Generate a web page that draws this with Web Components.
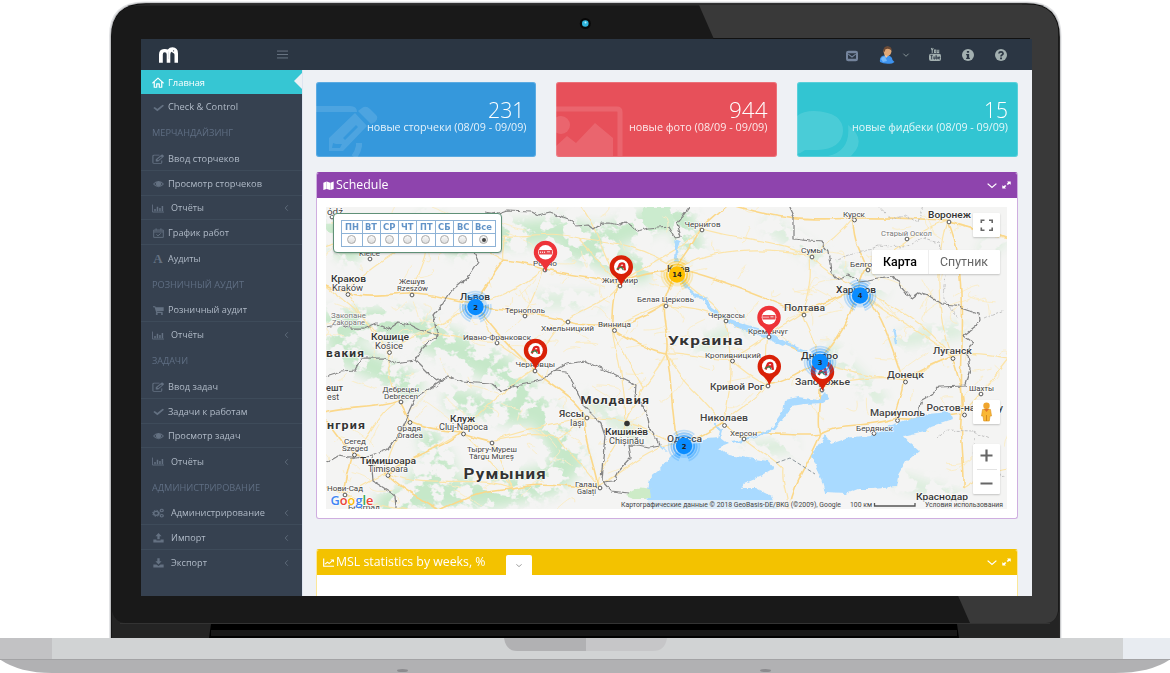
<!DOCTYPE html>
<html lang="ru">
<head>
<meta charset="utf-8">
<title>Dashboard</title>
<style>
html,body{margin:0;padding:0;background:#fff;overflow:hidden}
body{width:1170px;height:673px;font-family:"Open Sans",sans-serif}
</style>
</head>
<body>
<laptop-frame><dash-app></dash-app></laptop-frame>
<script>
const define=(name,html,after)=>{
  const t=document.createElement('template');t.innerHTML=html;
  customElements.define(name,class extends HTMLElement{
    connectedCallback(){
      if(this.shadowRoot)return;
      this.attachShadow({mode:'open'}).appendChild(t.content.cloneNode(true));
      if(after)after(this,this.shadowRoot);
    }
  });
};

/* Icons, drawn on a 16 unit grid */
const S='fill="none" stroke="currentColor" ';
const ICONS={
 home:`<path ${S}stroke-width="1.6" stroke-linejoin="round" stroke-linecap="round" d="M1 8.500L8 1.500L15 8.500M3 7.500V15H6.300V10H9.700V15H13V7.500"/>`,
 check:`<path ${S}stroke-width="3" d="M1.500 8L6.300 12.500L15 4"/>`,
 edit:`<path ${S}stroke-width="1.400" d="M10 1.800H3Q1.200 1.800 1.200 3.500V13.500Q1.200 15 3 15H11.500Q13 15 13 13.500V10.500"/><path fill="currentColor" fill-rule="evenodd" d="M5 11.800V8.500L12.500 1Q13.500 .2 14.500 1.200L15.500 2.200Q16.400 3.200 15.500 4.200L8.300 11.800zM7 8.900L8.200 10.100L13.200 5L12 3.800z"/>`,
 eye:`<path fill="currentColor" fill-rule="evenodd" d="M0 8Q3.500 3 8 3T16 8Q12.500 13 8 13T0 8zM1.800 8Q4.500 11.600 8 11.600T14.200 8Q12.600 5.800 11 5.200A4 4 0 1 1 5 5.200Q3.300 6 1.800 8z"/><circle cx="8" cy="7.500" r="2.800" fill="currentColor"/>`,
 chart:`<path ${S}stroke-width="1.300" d="M.7 1V14.300H16"/><path ${S}stroke-width="2" d="M4 13V9M7.300 13V5M10.600 13V7M13.900 13V3.500"/>`,
 cal:`<path ${S}stroke-width="1.400" d="M1 3.300H15V15H1zM1 6.300H15M4.500 .5V4M11.500 .5V4M5 10.300L7.300 12.500L11.300 8.500"/>`,
 cart:`<path fill="currentColor" d="M0 2H3.300L3.800 3.500H15.500V9.500L5.400 10.300L5.800 11.300H14V12.600H4.800L2.300 3.400H0z"/><circle cx="5.500" cy="14.300" r="1.500" fill="currentColor"/><circle cx="13" cy="14.300" r="1.500" fill="currentColor"/>`,
 cogs:`<circle cx="5.500" cy="8.500" r="3.300" ${S}stroke-width="2"/><circle cx="5.500" cy="8.500" r="4.800" ${S}stroke-width="1.300" stroke-dasharray="2 1.770"/><circle cx="13" cy="4" r="2" ${S}stroke-width="1.700"/><circle cx="13" cy="12.500" r="2" ${S}stroke-width="1.700"/>`,
 up:`<path fill="currentColor" d="M8 0L12.500 5H9.700V10H6.300V5H3.500zM.5 10.500H5V12H11V10.500H15.500V15H.5z"/>`,
 down:`<path fill="currentColor" d="M8 10.300L3.500 5.300H6.300V.5H9.700V5.300H12.500zM.5 10.500H5L8 12.700L11 10.500H15.500V15H.5z"/>`,
 left:`<path ${S}stroke-width="1.700" d="M11 2.500L5 8L11 13.500"/>`,
 chev:`<path ${S}stroke-width="2" d="M1 4.500L8 11.500L15 4.500"/>`,
 expand:`<path fill="currentColor" d="M9 1H15.500V7.500L13 5.500L10.500 7.900L8.200 5.800L10.800 3.300zM7 15H.5V8.500L3 10.500L5.500 8.100L7.800 10.200L5.200 12.700z"/>`,
 map:`<path fill="currentColor" d="M.5 3L5.200 1V14L.5 16zM5.600 1L10.400 3V16L5.600 14zM10.800 3L15.500 1V14L10.800 16z"/>`,
 line:`<path ${S}stroke-width="1.700" d="M1 1V14.500H16M3 11L6.500 7.500L9 10L14 4.500"/><path fill="currentColor" d="M10.500 2.500H16V8z"/>`,
 menu:`<path ${S}stroke-width="1.400" d="M0 3H16M0 8H16M0 13H16"/>`,
 mail:`<path fill="currentColor" fill-rule="evenodd" d="M3 1H13Q16 1 16 4V12Q16 15 13 15H3Q0 15 0 12V4Q0 1 3 1zM2.700 4.200V11.800H13.300V4.200z"/><path ${S}stroke-width="1.500" d="M3 5.500L8 9.300L13 5.500"/>`,
 tube:`<rect x="0" y="7" width="16" height="9" rx="2.500" fill="currentColor"/><path ${S}stroke-width="1.300" d="M3 0L4.300 3V6M5.600 0L4.300 3M7.300 2.500H9V5.500H7.300zM11 2V5.500H13V2"/><path fill="none" stroke="#2b3643" stroke-width="1.100" d="M2 9H5M3.500 9V14M6.500 10.500V13.500H8V10.500M9.500 8.500V13.500H11V11H9.500M14.500 13.500H12.800V11H14.300V12.200H12.800"/>`,
 info:`<circle cx="8" cy="8" r="8" fill="currentColor"/><path fill="#2b3643" d="M6.500 2.500H9.500V5H6.500zM5.500 6.500H9.500V11.500H10.500V13.300H5.500V11.500H6.500V8.200H5.500z"/>`,
 help:`<circle cx="8" cy="8" r="8" fill="currentColor"/><path fill="none" stroke="#2b3643" stroke-width="2.300" d="M5.200 6Q5.500 3.700 8 3.700T10.800 6Q10.800 7.200 9.300 7.900Q8 8.600 8 10"/><path fill="#2b3643" d="M6.800 11.200H9.300V13.500H6.800z"/>`
};
define('ui-icon','<style>:host{display:inline-block;flex:none}svg{display:block;width:100%;height:100%;overflow:visible}</style><svg viewBox="0 0 16 16" preserveAspectRatio="none"></svg>',(h,r)=>{
  const s=+h.getAttribute('size')||12;h.style.width=s+'px';h.style.height=(+h.getAttribute('h')||s)+'px';
  r.querySelector('svg').innerHTML=ICONS[h.getAttribute('name')]||'';
});
/* One line of text stretched to a given width */
define('fit-text','<style>:host{display:block;flex:none;white-space:nowrap}span{display:inline-block;transform-origin:0 50%;white-space:nowrap}</style><span><slot></slot></span>',(h,r)=>{
  const w=+h.getAttribute('w'),s=r.querySelector('span');
  h.style.width='max-content';
  const n=s.getBoundingClientRect().width;h.style.width=w+'px';
  if(n)s.style.transform=`scaleX(${w/n})`;
});

define('laptop-frame',`<style>
:host{display:block;position:relative;width:1170px;height:673px;box-sizing:border-box;padding:39px 138px 77px 141px}
svg{position:absolute;inset:0;z-index:0}
.screen{position:relative;z-index:1;height:557px;overflow:hidden}
</style>
<svg width="1170" height="673" viewBox="0 0 1170 673">
<defs><clipPath id="lid"><path d="M111.500 638V38Q111.500 4 146 4H1026Q1059 4 1059 38V638z"/></clipPath></defs>
<path fill="#e2e3e5" d="M109 638V36Q109 1.500 144 1.500H1028Q1061.500 1.500 1061.500 36V638z"/>
<path fill="#b4b5b7" d="M110.200 638V37Q110.200 2.500 145 2.500H1027Q1060.500 2.500 1060.500 37V638z"/>
<path fill="#060606" d="M111 638V37Q111 3.200 146 3.200H1026Q1059.800 3.200 1059.800 37V638z"/>
<g clip-path="url(#lid)">
<rect x="111" y="4" width="948" height="634" fill="#242424"/>
<path fill="#191919" d="M112 6H1059V611Q1056 623 1046 623H126Q115 623 112 611z"/>
<path fill="#393939" d="M699 5H1058V611Q1056 623 1046 623H970z"/>
<path d="M120 623.500H1050" stroke="#333"/>
<path fill="#000" d="M211 624H957L959 638H209z"/>
<rect x="211" y="630" width="746" height="6" fill="#181818"/>
</g>
<path d="M150 4H1022" stroke="#333" stroke-width="1"/>
<path d="M713 38.500H1030" stroke="#111"/>
<circle cx="585.300" cy="23.500" r="5.500" fill="#070707"/><circle cx="585.300" cy="23.500" r="3.300" fill="#2eb4dc"/><circle cx="585.500" cy="22.500" r="1" fill="#bdf0ff"/>
<path fill="#d1d3d4" d="M0 638H1170V660H0z"/>
<path fill="#c2c2c4" d="M0 638H52V660H0z"/><path fill="#e8ecf1" d="M1123 638H1170V660H1123z"/>
<path fill="#b1b1b3" d="M0 659.500H1170Q1150 673 1115 673H52Q20 673 0 659.500z"/>
<path d="M0 659.500H1170" stroke="#a3a3a5"/>
<path fill="#b1b1b3" d="M504 638H586V651H517Q506 651 504 638z"/><path fill="#c6c6c8" d="M586 638H667Q665 651 653 651H586z"/>
<ellipse cx="402.500" cy="670.500" rx="5.500" ry="1.500" fill="#8b8b8e"/><ellipse cx="765.500" cy="670.500" rx="5.500" ry="1.500" fill="#8b8b8e"/>
</svg>
<div class="screen"><slot></slot></div>`);

define('dash-app',`<style>
:host{display:grid;grid-template-rows:31px 526px;height:557px;background:#eef1f5}
.main{display:grid;grid-template-columns:161px 1fr;min-height:0}
.content{padding:12px 14px 0 12.500px;min-width:0;border-left:1px solid #dfe5f0;box-sizing:border-box;overflow:hidden}
.cards{display:grid;grid-template-columns:repeat(3,1fr);gap:20px}
.p1{margin-top:15px;height:347px}.p2{margin-top:30px;height:100px}
</style>
<top-bar></top-bar>
<div class="main"><side-menu></side-menu>
<div class="content">
<div class="cards">
<stat-card kind="edit" value="231" vw="36.500" w="159.500" r="10" vr="11.500" style="--bg:#3598dc">новые сторчеки (08/09 - 09/09)</stat-card>
<stat-card kind="photo" value="944" vw="38.500" w="138.500" r="9.500" vr="9.500" style="--bg:#e7505a">новые фото (08/09 - 09/09)</stat-card>
<stat-card kind="chat" value="15" vw="24" w="156" r="9.500" vr="10" style="--bg:#32c5d2">новые фидбеки (08/09 - 09/09)</stat-card>
</div>
<port-let class="p1" icon="map" heading="Schedule" w="52.500" style="--c:#8e44ad;--b:#cfaee0"><geo-map></geo-map></port-let>
<port-let class="p2" icon="line" heading="MSL statistics by weeks, %" w="149.500" tab style="--c:#f3c200;--b:#fbe798"></port-let>
</div></div>`);

define('top-bar',`<style>
:host{display:flex;align-items:center;background:#2b3643;color:#a3b0b0;box-sizing:border-box;padding:0 25px 0 17px}
.logo{width:21px;height:18px;margin-right:97.500px}
.sp{flex:1}
.ava{width:16px;height:18px;margin:0 8px 0 21.500px}
</style>
<svg class="logo" viewBox="0 0 21 18"><path fill="#fff" d="M1 16.800V8.500Q1 3.300 6 3Q8.500 2.800 9.800 3.500Q11.500 1.300 14.500 1.300Q20 1.500 20 7.500V16.800H16.500V8.800Q16.500 7.200 14.800 6.800L13.600 5.800Q12.300 6.500 12.300 8.500V16.800H8.700V8.500Q8.700 6.300 6.700 6.300T4.800 8.500V16.800z"/><path d="M10.600 5.500V13" stroke="#c9ced4" stroke-width=".6"/><circle cx="15.600" cy="4.800" r=".6" fill="#2b3643"/></svg>
<ui-icon name="menu" size="11" style="color:#6b7785"></ui-icon><span class="sp"></span>
<ui-icon name="mail" size="12" style="color:#74849c;margin-top:2px"></ui-icon>
<svg class="ava" viewBox="0 0 16 18"><path fill="#3d93ef" d="M1 16Q0 9 7 9.500Q13 9 13.500 14L15.500 16L13 17.500Q5 18.500 1 16z"/><path fill="#74b9fb" d="M2 13Q3 10 6 10.500L8 15L4 16z"/><path fill="#efc49b" d="M5.500 9L7 12L10 9V7H5.500z"/><ellipse cx="8.500" cy="5.300" rx="3.900" ry="4.600" fill="#e0a877"/><path fill="#6c4a35" d="M4.400 5.500Q4 .3 9 .3Q13 .6 12.500 4.500Q10 2 6.500 3.300Q6 5.500 4.800 6.500z"/></svg>
<ui-icon name="chev" size="6" h="6" style="margin-right:20px;margin-top:1px"></ui-icon>
<ui-icon name="tube" size="12" h="13"></ui-icon>
<ui-icon name="info" size="12" style="margin-left:21px"></ui-icon>
<ui-icon name="help" size="12" style="margin-left:20.500px;margin-right:.5px"></ui-icon>`);

const MENU=[['home','Главная',37,'a'],['check','Check & Control',70],['h','МЕРЧАНДАЙЗИНГ',81],
['edit','Ввод сторчеков',71.500],['eye','Просмотр сторчеков',94],['chart','Отчёты',33,'s'],['cal','График работ',61],['A','Аудиты',32.500],
['h','РОЗНИЧНЫЙ АУДИТ',92],['cart','Розничный аудит',79],['chart','Отчёты',33,'s'],['h','ЗАДАЧИ',36],
['edit','Ввод задач',50],['check','Задачи к работам',79.500],['eye','Просмотр задач',72.500],['chart','Отчёты',33,'s'],
['h','АДМИНИСТРИРОВАНИЕ',108],['cogs','Администрирование',94,'s'],['up','Импорт',34.500,'s'],['down','Экспорт',36,'s']];
define('side-menu',`<style>:host{display:block;background:#364150}</style><div></div>`,(h,r)=>{
  r.querySelector('div').innerHTML=MENU.map(([i,t,w,f='-'],k)=>`<menu-item icon="${i}" w="${w}" f="${f}" ${MENU[k+1]&&MENU[k+1][0]!='h'&&i!='h'?'line':''}>${t.replace('&','&amp;')}</menu-item>`).join('');
});
define('menu-item',`<style>
:host{display:flex;align-items:center;height:24.800px;box-sizing:border-box;padding:2px 12.500px 0 11px;font-size:9.700px;line-height:14px;color:#b0bac7;position:relative}
:host([line]){border-bottom:1px solid #3e4b5a}
:host([f=a]){height:24px;background:#36c6d3;color:#fff;border:0;padding-top:1px}
:host([f=a])::after{content:"";position:absolute;right:0;top:3px;border:solid transparent;border-width:8.500px 8px 8.500px 0;border-right-color:#eef1f5}
:host([icon=h]){height:27.200px;color:#5f6e83;padding-left:10.500px}
.ic{width:12px;margin-right:4px;display:flex;justify-content:center;color:#647182;font:700 13px/12px "Liberation Serif",serif}
:host([f=a]) .ic{color:#fff}
:host([f=s]) .ic{margin-right:6.500px}
.g{flex:1}.arr{color:#647182}
</style><span class="ic"></span><fit-text><slot></slot></fit-text><span class="g"></span>`,(h,r)=>{
  const n=h.getAttribute('icon'),f=h.getAttribute('f'),ic=r.querySelector('.ic');
  const ft=r.querySelector('fit-text'),w=h.getAttribute('w');
  if(n=='h')ic.remove();else if(n=='A')ic.textContent='A';
  else ic.innerHTML=`<ui-icon name="${n}" size="${['home','chart','edit','cogs'].includes(n)?12:11}" h="${n=='home'?11:n=='chart'||n=='check'?9:10}"></ui-icon>`;
  if(f=='s')r.querySelector('.g').insertAdjacentHTML('afterend','<ui-icon class="arr" name="left" size="7" h="8"></ui-icon>');
  const t=document.createElement('fit-text');t.setAttribute('w',w);t.textContent=h.textContent;ft.replaceWith(t);
});

const MARKS={
 edit:'<path fill="none" stroke="#fff" stroke-width="6" d="M0 29H34Q38 29 38 32M43 63V66Q42 72 38 77"/><path fill="#fff" fill-rule="evenodd" d="M13 71V58L39 33L51 46L27 71zM17 63L16 68L24 68L26 64L20 64zM27 58L29 60L42 47L40 45z"/><path fill="#fff" d="M42 31L46 28Q50 25 54 29L60 35Q63 38 59 42L55 44z"/>',
 photo:'<path fill="none" stroke="#fff" stroke-width="5" d="M0 29H61Q64 29 64 32V76"/><circle cx="5" cy="45" r="9" fill="#fff"/><path fill="#fff" d="M0 66L11 56L20 63L39 43L57 58V76H0z"/>',
 chat:'<path fill="#fff" d="M0 36Q6 31 17 31Q46 32 46 51Q45 69 20 70L8 70Q4 73 0 74z"/><path fill="#fff" d="M51 45Q67 57 59 70L54 76H31Q54 71 51 45z"/>'};
define('stat-card',`<style>
:host{display:flex;flex-direction:column;align-items:flex-end;height:75px;box-sizing:border-box;background:var(--bg);border-radius:3px;color:#fff;position:relative;overflow:hidden;padding-top:13.500px;box-shadow:inset 0 0 0 1px #ffffff30}
svg{position:absolute;left:0;top:-2px;opacity:.12}
.v{font-size:21.500px;line-height:28px;height:24px;font-weight:300}
.t{font-size:10.500px;line-height:14px;color:#fffd}
</style><svg width="80" height="78"></svg>`,(h,r)=>{
  r.querySelector('svg').innerHTML=MARKS[h.getAttribute('kind')];
  const add=(c,w,t,m)=>{const e=document.createElement('fit-text');e.className=c;e.setAttribute('w',w);e.textContent=t;e.style.marginRight=m+'px';r.appendChild(e)};
  add('v',h.getAttribute('vw'),h.getAttribute('value'),h.getAttribute('vr'));
  add('t',h.getAttribute('w'),h.textContent,h.getAttribute('r'));
});

define('port-let',`<style>
:host{display:flex;flex-direction:column;box-sizing:border-box;border:1px solid var(--b);border-radius:3px;background:#fff;overflow:hidden;border-top-color:var(--c)}
.hd{flex:none;height:25px;background:var(--c);color:#fff;display:flex;align-items:center;padding:0 6px 0 6px;margin-top:-.5px;font-size:12px;line-height:18px;box-sizing:border-box}
.t{margin-left:2.500px}.g{flex:1}
.tab{align-self:flex-end;width:26px;height:21px;margin:0 0 -1px 20.500px;background:#fff;border-radius:2px 2px 0 0;color:#777;display:flex;align-items:center;justify-content:center}
.body{padding:9.500px 10px 8px 9.500px;flex:1;min-height:0;position:relative}
</style><div class="hd"><ui-icon size="11" h="9"></ui-icon><span class="g"></span><ui-icon name="chev" size="10" h="9"></ui-icon><ui-icon name="expand" size="9" h="8" style="margin-left:5px"></ui-icon></div><div class="body"><slot></slot></div>`,(h,r)=>{
  const i=r.querySelector('ui-icon'),n=document.createElement('ui-icon');
  n.setAttribute('name',h.getAttribute('icon'));n.setAttribute('size',11);n.setAttribute('h',9);i.replaceWith(n);
  const e=document.createElement('fit-text');e.className='t';e.setAttribute('w',h.getAttribute('w'));e.textContent=h.getAttribute('heading');
  n.after(e);
  if(h.hasAttribute('tab'))e.insertAdjacentHTML('afterend','<span class="tab"><ui-icon name="chev" size="6" h="5"></ui-icon></span>');
});

/* Labels: text, left, baseline, width, size, style (c country, m major, n normal, s small) */
const L=[['ódź',327,215,16,8.5,'n'],['Kielce',359,256,21,8,'n'],['Краков',331,282,35,9.3,'m'],['Kraków',332,290.5,31,8.5,'n'],['Жешув',399,284,26,7.5,'n'],['Rzeszów',397,291.3,31,7.5,'n'],
['Львов',460,300,30,9,'m'],['Тернополь',505,313,40,7.3,'n'],['Закопане',331,317.5,35,7,'s'],['Zakopane',332,324.5,33,7,'s'],['Кошице',371,340,38,9.3,'m'],['Košice',375,348.5,28,8.5,'n'],
['вакия',326,357,38,10.5,'c'],['Ивано-Франковск',463,339.7,68,7.2,'n'],['Хмельницкий',541,330.5,53,7.2,'n'],['Ровно',533,266,24,7.5,'n'],['Житомир',602,282.5,36,7.5,'n'],['Винница',598,327,33,7.3,'n'],
['Киев',667,272,23,9,'m'],['Чернигов',684.5,226.7,36,7.5,'n'],['Белая Церковь',637,302,57,7.3,'n'],['Черкассы',708,317.5,37,7.3,'n'],['Украина',668,344.5,75,13.7,'c'],['Кременчуг',748,333.7,40,7.3,'n'],
['Кропивницкий',705,357.8,56,7.2,'n'],['Полтава',784,311,41,9,'m2'],['Сумы',801,253,22,7.5,'n'],['Курск',843,216.7,22,7.5,'n'],['Воронеж',928,218,43,9.3,'m'],['Старый Оскол',881,235.7,51,7.2,'s'],
['Белгород',850,267,36,7.3,'n'],['Харьков',836,293,40,9,'m'],['Луганск',933,354,39,9.3,'m2'],['Днипро',801,359,37,9,'m'],['Донецк',887,378,37,9,'m2'],['Запорожье',795,385,55,9,'m2'],
['Кривой Рог',710,390,54,9,'m2'],['Мариуполь',870,416,55,9,'m2'],['Ростов-на-Дону',926.5,410.5,76.5,9,'m2'],['Шахты',969,391,25,7.3,'n'],['Бердянск',856,430.5,37,7.3,'n'],['Николаев',700,421,48,9,'m2'],
['Херсон',730,436,27,7.3,'n'],['Одесса',667,442,35,9,'m2'],['Краснодар',916,500,52,9.2,'m'],['Молдавия',580.5,403.5,68.5,11,'c'],['Яссы',559,416.5,25,8.8,'m2'],['Iași',570,425.5,14,8.3,'n'],
['Кишинёв',605,435.3,43,9,'m'],['Chișinău',609,443.7,35,8.3,'n'],['Черновцы',515.5,367.3,39.5,7.2,'n'],['Дебрецен',382.5,391.5,36.5,7.2,'n'],['Debrecen',384,398.7,34,7.2,'n'],['ешт',326,391,17,9,'m2'],['est',327,399.7,12,8.3,'n'],
['нгрия',327,429,38,11,'c'],['Клуж',450,421.7,25,9.2,'m'],['Cluj-Napoca',439,430.3,49,8.3,'n'],['Орадя',397,431.3,24,7.2,'n'],['Oradea',397,438.3,26,7.2,'n'],['Сегед',344,444.3,22,7.2,'n'],['Szeged',342,451.3,26,7.2,'n'],
['Тыргу-Муреш',467,452,50,7.2,'n'],['Târgu Mureș',469,459.3,45,7.2,'n'],['Тимишоара',360,463.7,56,9,'m'],['Timișoara',368,472,40,8.3,'n'],['Румыния',463.5,479,82.5,14.5,'c'],['Нови-Сад',327,491.3,36,7.3,'n'],
['Белград',348,510,32,8,'n'],['Галац',575,487.3,22,7.2,'n'],['Galați',577,494.3,19,7.2,'n']];
const DOTS=[[332,217],[370,259],[348,294.5],[412,295],[525,316],[389.5,352.5],[497,343],[568,322],[545,270],[620,286],[614.5,330.5],[702,230],[666,306],[726,321],[769,337],[732.5,361],[804,315],[812,257],[854.5,220],[949,222],[907,239],[868,270],[953,358.5],[905.5,382],[822,390],[768,386],[897.5,420.5],[964.5,415],[981,394],[874,433.5],[724.5,425.5],[744,439],[587,418],[535,371],[401,402],[463.5,434],[410,422.5],[354.5,455],[492,443],[388,475.5],[345,495],[600,488]];
const P={k:[677,270],zh:[620,286],ro:[545,270],lv:[476,305],tp:[525,316],hm:[568,322],vn:[614,330],bc:[666,306],ch:[702,230],ck:[726,321],kr:[769,337],kp:[732,361],po:[804,315],su:[812,257],ku:[854,220],vo:[949,222],bl:[868,270],ha:[860,290],lu:[953,358],dn:[820,362],do:[905,382],za:[822,390],kg:[768,386],ma:[897,420],rs:[964,415],ni:[724,425],he:[744,439],od:[680,445],kd:[965,490],ki:[627,424],ia:[587,418],cv:[535,371],iv:[497,343],db:[401,402],cl:[463,434],orr:[410,422],sg:[354,455],tm:[492,443],ti:[388,475],nv:[345,495],gl:[600,488],kw:[348,294],rz:[412,295],ks:[389,352],W:[322,284],W2:[322,250],WB:[322,415],WR:[322,488],B1:[440,512],B2:[560,512],E1:[1010,240],E2:[1010,360],N1:[730,205],N2:[580,205],E3:[1010,470],br:[515,490],bc2:[560,440],me:[822,435],cr:[790,512],sz:[785,470],lk:[505,262],lub:[430,235],kv:[505,238],sar:[580,240],mz:[645,390],um:[668,355],uz:[425,335]};
const MAJOR='W-kw kw-rz rz-lv lv-tp tp-hm hm-vn vn-bc vn-um um-od lv-lk lk-ro ro-zh zh-k k-ch ch-N1 k-bc bc-um k-po po-ha ha-bl bl-ku ku-N1 ha-do do-ma do-lu lu-rs ha-dn dn-za za-me me-cr od-ni ni-he he-me ma-rs rs-kd vo-rs vo-ku vo-E1 dn-kr kr-ck kg-dn WB-db db-orr orr-cl cl-tm WB-sg sg-ti sg-nv nv-WR ti-B1 ti-cl ia-cv ia-gl br-B1 br-gl cv-lv zh-vn me-ma'.split(' ');
const MINOR='W2-lub lub-lk ro-lv ro-tp iv-lv iv-cv cv-hm hm-zh k-ck ck-kp kp-kg kg-ni kp-um ni-kp po-kr kr-kg kr-kp po-su su-ku su-k su-ha ch-su dn-do za-do lu-ha lu-do lu-E2 vo-E1 bl-vo rs-E2 kd-E3 cl-cv tm-ia tm-br tm-bc2 bc2-ia bc2-gl ki-od ki-ia ki-mz mz-um mz-vn ki-gl cl-ti cl-br ti-br orr-ti db-ks ks-kw ks-uz uz-lv kw-lub sg-db nv-ti nv-B1 kv-lub kv-sar sar-zh kv-lk sar-k N2-zh iv-uz he-sz sz-cr od-gl ni-um ha-po dn-po ha-lu vo-lu W-ks ch-zh ck-bc bc-vn ki-vn rz-lub'.split(' ');
const D=(a,z)=>'M'+a.map(p=>p.join(' ')).join('L')+(z||'');
const BORDERS=[
 [[486,213],[500,215],[509,212],[533,213],[540,217],[552,214],[560,217],[573,222],[577,228],[590,227],[595,231],[603,225],[612,225],[620,227],[627,223],[640,233],[650,230],[670,228],[677,240],[682,239],[678,225],[685,216],[692,207]],
 [[475,252],[480,263],[470,278],[453,292],[444,306],[435,317],[440,338]],[[440,338],[423,332],[412,326],[400,324],[390,331],[378,325],[366,330],[352,330],[343,326],[327,329]],
 [[327,378],[343,373],[357,372],[363,360],[387,360],[397,365],[417,362],[430,375],[442,383],[450,378],[463,383],[493,385],[503,393],[517,387],[543,382],[557,372],[568,373],[578,390],[585,407],[603,425],[607,437],[603,482],[613,493],[630,495]],
 [[440,338],[432,342],[424,350],[417,362]],
 [[557,372],[568,366],[587,363],[610,373],[638,387],[637,400],[648,413],[653,433],[662,447],[650,449],[640,447],[630,447],[632,460],[620,473],[615,483],[605,484]],
 [[442,383],[430,391],[417,400],[408,420],[400,437],[390,450],[373,457],[375,483],[397,497],[398,509]],[[327,465],[340,457],[357,460],[373,457]],
 [[790,207],[795,218],[795,240],[812,242],[822,243],[830,253],[833,273],[838,280],[850,277],[860,283],[870,282],[880,280],[895,278],[903,288],[913,300],[921,294],[930,297],[943,306],[957,307],[980,315],[981,322],[978,328],[965,338],[975,345],[967,353],[970,357],[972,370],[967,387],[940,388],[933,397],[922,403],[920,418]]];

define('map-scene',`<style>:host{display:block;width:681px;height:302px}svg{display:block;font-family:Roboto,sans-serif}
.halo{paint-order:stroke;stroke:#fff;stroke-opacity:.75;stroke-width:1.500px;stroke-linejoin:round}</style>
<svg width="681" height="302" viewBox="326 207 681 302">
<defs>
<filter id="patch" x="326" y="207" width="681" height="302" filterUnits="userSpaceOnUse" color-interpolation-filters="sRGB"><feTurbulence type="fractalNoise" baseFrequency=".055 .065" numOctaves="4" seed="7"/><feColorMatrix values="0 0 0 0 .775  0 0 0 0 .91  0 0 0 0 .79  14 0 0 0 -6.600"/></filter>
<filter id="jag" x="326" y="207" width="681" height="302" filterUnits="userSpaceOnUse"><feTurbulence type="fractalNoise" baseFrequency=".13" numOctaves="3" seed="3" result="n"/><feDisplacementMap in="SourceGraphic" in2="n" scale="7" xChannelSelector="R" yChannelSelector="G" color-interpolation-filters="sRGB"/></filter>
<filter id="wave" x="326" y="207" width="681" height="302" filterUnits="userSpaceOnUse"><feTurbulence type="fractalNoise" baseFrequency=".07" numOctaves="2" seed="9" result="n"/><feDisplacementMap in="SourceGraphic" in2="n" scale="7" xChannelSelector="R" yChannelSelector="G" color-interpolation-filters="sRGB"/></filter>
<filter id="soft"><feGaussianBlur stdDeviation="6"/></filter>
<mask id="woods" maskUnits="userSpaceOnUse" x="326" y="207" width="681" height="302"><g fill="none" stroke="#fff" filter="url(#soft)" stroke-linecap="round" stroke-linejoin="round">
<path stroke-width="30" d="M330 325L400 322L450 345L500 370L530 400L555 430L570 460L550 480L500 492L430 495L390 505"/>
<path stroke-width="22" d="M430 440L445 470L420 480M455 400L520 415"/>
<path stroke-width="24" d="M330 230L350 250M505 235L560 230L600 240L640 225L665 215M570 245L640 270M680 215L690 245M340 350L410 385M430 225L460 245"/>
<path stroke-width="12" opacity=".65" d="M770 225L830 265L880 290M900 340L960 330M985 250L1000 240M750 450L790 445M900 480L960 500M830 350L880 400M700 345L740 330M540 300L600 300M590 400L640 440"/>
</g></mask></defs>
<rect x="326" y="207" width="681" height="302" fill="#f4f4f3"/>
<rect x="326" y="207" width="681" height="302" filter="url(#patch)" mask="url(#woods)"/>
<path fill="#cbebce" d="M645 209L672 209L676 222L668 231L651 232L644 224z" filter="url(#jag)"/>
<g id="roads" fill="none" filter="url(#wave)"></g>
<g filter="url(#jag)" fill="#a9daff" stroke="none">
<path d="M653 512L647 497L650 480L660 472L673 458L685 450L697 443L708 440L722 439L730 445L720 449L730 457L750 460L770 463L776 470L762 478L745 485L742 490L757 490L773 498L779 512z"/>
<path d="M827 437L833 445L847 440L873 437L890 428L907 422L930 415L950 413L954 421L933 428L927 433L905 438L912 446L920 453L908 463L900 477L898 488L873 490L860 490L847 495L827 494L823 480L817 467L813 457z"/>
<path d="M674 241L682 243L679 252L681 264L675 264L677 252z"/>
<path d="M723 318L735 322L749 327L760 330L772 335L790 345L784 347L766 339L749 333L735 328z"/>
<path d="M786 402L800 399L820 402L827 394L830 401L824 405L807 406L793 408L786 418L776 431L771 433L784 414z"/></g>
<g fill="none" stroke="#a9daff" filter="url(#jag)"><path stroke-width="3" d="M680 270L686 287L697 297L707 300L710 308L724 319M788 345L805 352L818 362L822 380L824 395"/><path stroke-width="2" d="M773 432L763 436L747 441L733 444M716 425L723 432L721 440M895 330L898 345"/><path stroke-width="1.500" d="M662 448L668 454M420 230L424 240"/></g>
<path fill="#cdebc7" d="M627 497Q640 485 652 492L653 500L636 500z" filter="url(#jag)"/>
<g id="regions" fill="none" stroke="#bcbcbc" stroke-width=".9" stroke-dasharray="3 1.500" filter="url(#jag)"><path d="M880 207L893 222L907 217L920 224L925 207M835 262L860 254L880 247L905 249L925 240L940 244L948 262L945 300L960 320M985 321L1006 312M938 440L948 432L975 433L992 440M976 440L974 455L985 470L1006 478"/></g>
<path d="M776 463L790 458L815 474" stroke="#8f999e" stroke-width="1" stroke-dasharray="4 2" fill="none"/>
<g id="borders" fill="none" stroke="#858585" stroke-width="1.250" stroke-linejoin="round" filter="url(#jag)"></g>
<g id="dots" fill="#fff" stroke="#555" stroke-width="1"></g>
<circle cx="627" cy="423.500" r="2.800" fill="#333"/>
<g id="labels"></g>
<rect x="620" y="500" width="387" height="9" fill="#f5f5f5" opacity=".72"/>
<g font-size="6.300" fill="#444"><text x="621" y="507" textLength="220" lengthAdjust="spacingAndGlyphs">Картографические данные © 2018 GeoBasis-DE/BKG (©2009), Google</text><text x="850" y="507" textLength="22" lengthAdjust="spacingAndGlyphs">100 км</text><text x="925" y="507" textLength="78" lengthAdjust="spacingAndGlyphs">Условия использования</text></g>
<path d="M874.500 503V506H915V503" fill="none" stroke="#555" stroke-width="1.300"/>
<text class="halo" x="330.500" y="505" font-size="12" font-family="Open Sans" font-weight="600" textLength="43" lengthAdjust="spacingAndGlyphs"><tspan fill="#4285f4">G</tspan><tspan fill="#ea4335">o</tspan><tspan fill="#fbbc05">o</tspan><tspan fill="#4285f4">g</tspan><tspan fill="#34a853">l</tspan><tspan fill="#ea4335">e</tspan></text>
<g id="pins"></g>
</svg>`,(h,r)=>{
  const q=s=>r.querySelector(s);
  let seed=11;const rnd=()=>(seed=(seed*16807)%2147483647)/2147483647-.5;
  const road=k=>{const [a,b]=k.split('-').map(n=>P[n]);const d=Math.hypot(b[0]-a[0],b[1]-a[1])*.22;
    return `M${a}C${a[0]+(b[0]-a[0])/3+rnd()*d} ${a[1]+(b[1]-a[1])/3+rnd()*d} ${a[0]+(b[0]-a[0])*2/3+rnd()*d} ${a[1]+(b[1]-a[1])*2/3+rnd()*d} ${b}`};
  let tiny='';
  for(let i=0;i<230;i++){const x=326+(rnd()+.5)*681,y=207+(rnd()+.5)*302;if((y>435&&x>640&&x<920))continue;tiny+=`M${x} ${y}q${rnd()*30} ${rnd()*24} ${rnd()*56} ${rnd()*44}`}
  q('#roads').innerHTML=`<path d="${tiny}" stroke="#fbecc4" stroke-width=".9"/><path d="${MINOR.map(road).join('')}" stroke="#fce4a8" stroke-width="1.200"/><path d="${MAJOR.map(road).join('')}" stroke="#fbd88a" stroke-width="1.600"/>`;
  q('#borders').innerHTML=BORDERS.map(b=>`<path d="${D(b)}"/>`).join('');
  q('#dots').innerHTML=DOTS.map(([x,y])=>`<circle cx="${x}" cy="${y}" r="1.900"/>`).join('');
  q('#labels').innerHTML=L.map(([t,x,y,w,s,k])=>{const st={c:'font-weight="700" fill="#333" letter-spacing="1"',m:'font-weight="500" fill="#333"',m2:'font-weight="500" fill="#444"',n:'fill="#444"',s:'fill="#777"'}[k];
    return `<text class="halo" x="${x}" y="${y}" font-size="${s}" ${st} textLength="${k=='c'?w+1:w}" lengthAdjust="spacingAndGlyphs">${t}</text>`}).join('');
  const pin=(x,y,k)=>`<g transform="translate(${x} ${y})"><path fill="${k?'#ee3338':'#d92107'}" d="M0 18.500Q-2.500 11.500 -8.500 7.500A11.700 11.700 0 1 1 8.500 7.500Q2.500 11.500 0 18.500z"/><circle cy="-.7" r="7.300" fill="#fff"/>${k?'<rect x="-6.500" y="-3" width="13" height="4.500" fill="#e94a50"/><path d="M-5 -1.500V0M-3 -1.500V0M-1 -1.500V0M1.500 -1.200H4.500" stroke="#fff" stroke-width=".8"/>':'<path d="M-3.800 2.500L-1.300 -3.300Q1 -5 2.800 -3.300L3.600 2.800M-1 -.5H2.500" fill="none" stroke="#d22" stroke-width="2.300"/><path d="M-4.500 1.500L0 -.5L2 2.500" fill="none" stroke="#2c8b4f" stroke-width="1.200"/>'}</g>`;
  const cl=(x,y,n,c)=>{const arcs=[10.200,12.800,15.400].map((R,i)=>`<circle r="${R}" fill="none" stroke="${c}" stroke-width="1.700" opacity="${[.6,.4,.22][i]}" stroke-dasharray="${R*1.450} ${R*.644}" transform="rotate(-132)"/>`).join('');
    return `<g transform="translate(${x} ${y})"><circle r="12" fill="${c}" opacity=".18"/>${arcs}<circle r="8.200" fill="${c}"/><text y="2.500" text-anchor="middle" font-size="6.800" font-weight="700" font-family="DejaVu Sans" fill="#222">${n}</text></g>`};
  q('#pins').innerHTML=pin(545.500,253,1)+pin(621.300,267.500)+pin(535.500,351)+pin(769,318,1)+pin(769.300,367)+pin(822.500,372.500)+cl(475.500,307,2,'#0a8cff')+cl(677,274.500,14,'#ffbf00')+cl(860,295.500,4,'#0a8cff')+cl(820,362,3,'#0a8cff')+cl(684,446,2,'#0a8cff');
});

define('day-filter',`<style>
:host{display:block;box-sizing:border-box;width:169px;height:40px;background:#fff;border:1px solid #5f9077;border-radius:4px;padding:6px 7px;box-shadow:0 1px 2px #0003}
.g{display:grid;grid-template-columns:20.500px 18px 18px 18.500px 18.500px 18.500px 18.500px 23.500px;grid-template-rows:12.500px 13px;border:1px solid #8db2d6;border-width:1px 0 0 1px;width:154px}
.c{border:1px solid #8db2d6;border-width:0 1px 1px 0;box-sizing:border-box;display:flex;align-items:center;justify-content:center;font:700 8.500px/10px "DejaVu Sans",sans-serif;color:#6394c8;overflow:hidden}
i{width:7px;height:7px;border-radius:50%;border:1px solid #aaa;background:linear-gradient(#fafafa,#ddd);display:flex;align-items:center;justify-content:center;box-sizing:content-box}
i.on::after{content:"";width:4px;height:4px;border-radius:50%;background:#444}
</style><div class="g"></div>`,(h,r)=>{
  const d=[['ПН',14],['ВТ',12],['СР',12.5],['ЧТ',12.5],['ПТ',12.5],['СБ',12.5],['ВС',12.5],['Все',17]];
  r.querySelector('.g').innerHTML=d.map(x=>`<div class="c"><fit-text w="${x[1]}">${x[0]}</fit-text></div>`).join('')+d.map((x,i)=>`<div class="c"><i class="${i==7?'on':''}"></i></div>`).join('');
});

define('geo-map',`<style>
:host{display:block;position:relative;width:681px;height:302px;overflow:hidden}
.o{position:absolute;background:#fff;box-shadow:0 1px 2px #0003;border-radius:1px}
svg{display:block}
.days{position:absolute;left:7px;top:6px}
.fs{left:647px;top:6px;width:27px;height:24px}
.type{left:546px;top:43px;width:128px;height:24px;display:grid;grid-template-columns:56.500px 1fr;font:400 12px/24px Roboto,sans-serif;color:#666}
.type>*{display:flex;justify-content:center}.type b{font-weight:500;color:#000;border-right:1px solid #eee}
.peg{left:647px;top:193px;width:27px;height:24px}
.zoom{left:647px;top:237px;width:27px;height:50px}
</style>
<map-scene></map-scene>
<day-filter class="days"></day-filter>
<div class="o fs"><svg width="27" height="24"><path d="M8.300 10V7.300H11.500M16 7.300H19.200V10M19.200 14.500V17.200H16M11.500 17.200H8.300V14.500" fill="none" stroke="#666" stroke-width="1.600"/></svg></div>
<div class="o type"><b><fit-text w="34">Карта</fit-text></b><span><fit-text w="48">Спутник</fit-text></span></div>
<div class="o peg"><svg width="27" height="24"><circle cx="13.500" cy="5.800" r="3.200" fill="#f0a52c"/><path fill="#f9b736" stroke="#d99020" stroke-width=".6" d="M9.500 9.500Q13.500 8 17.500 9.500L18.500 16H17L16.300 21H10.700L10 16H8.500z"/><path fill="#e0752b" d="M11 9L13.500 12L16 9z"/><path d="M13.500 15V21" stroke="#c97f1a" stroke-width=".8"/></svg></div>
<div class="o zoom"><svg width="27" height="50"><path d="M7.500 11.500H19.500M13.500 5.500V17.500M7.500 39.500H19.500" stroke="#666" stroke-width="2.200"/><path d="M4 25.500H24" stroke="#e3e3e3"/></svg></div>`);
</script>
</body>
</html>
